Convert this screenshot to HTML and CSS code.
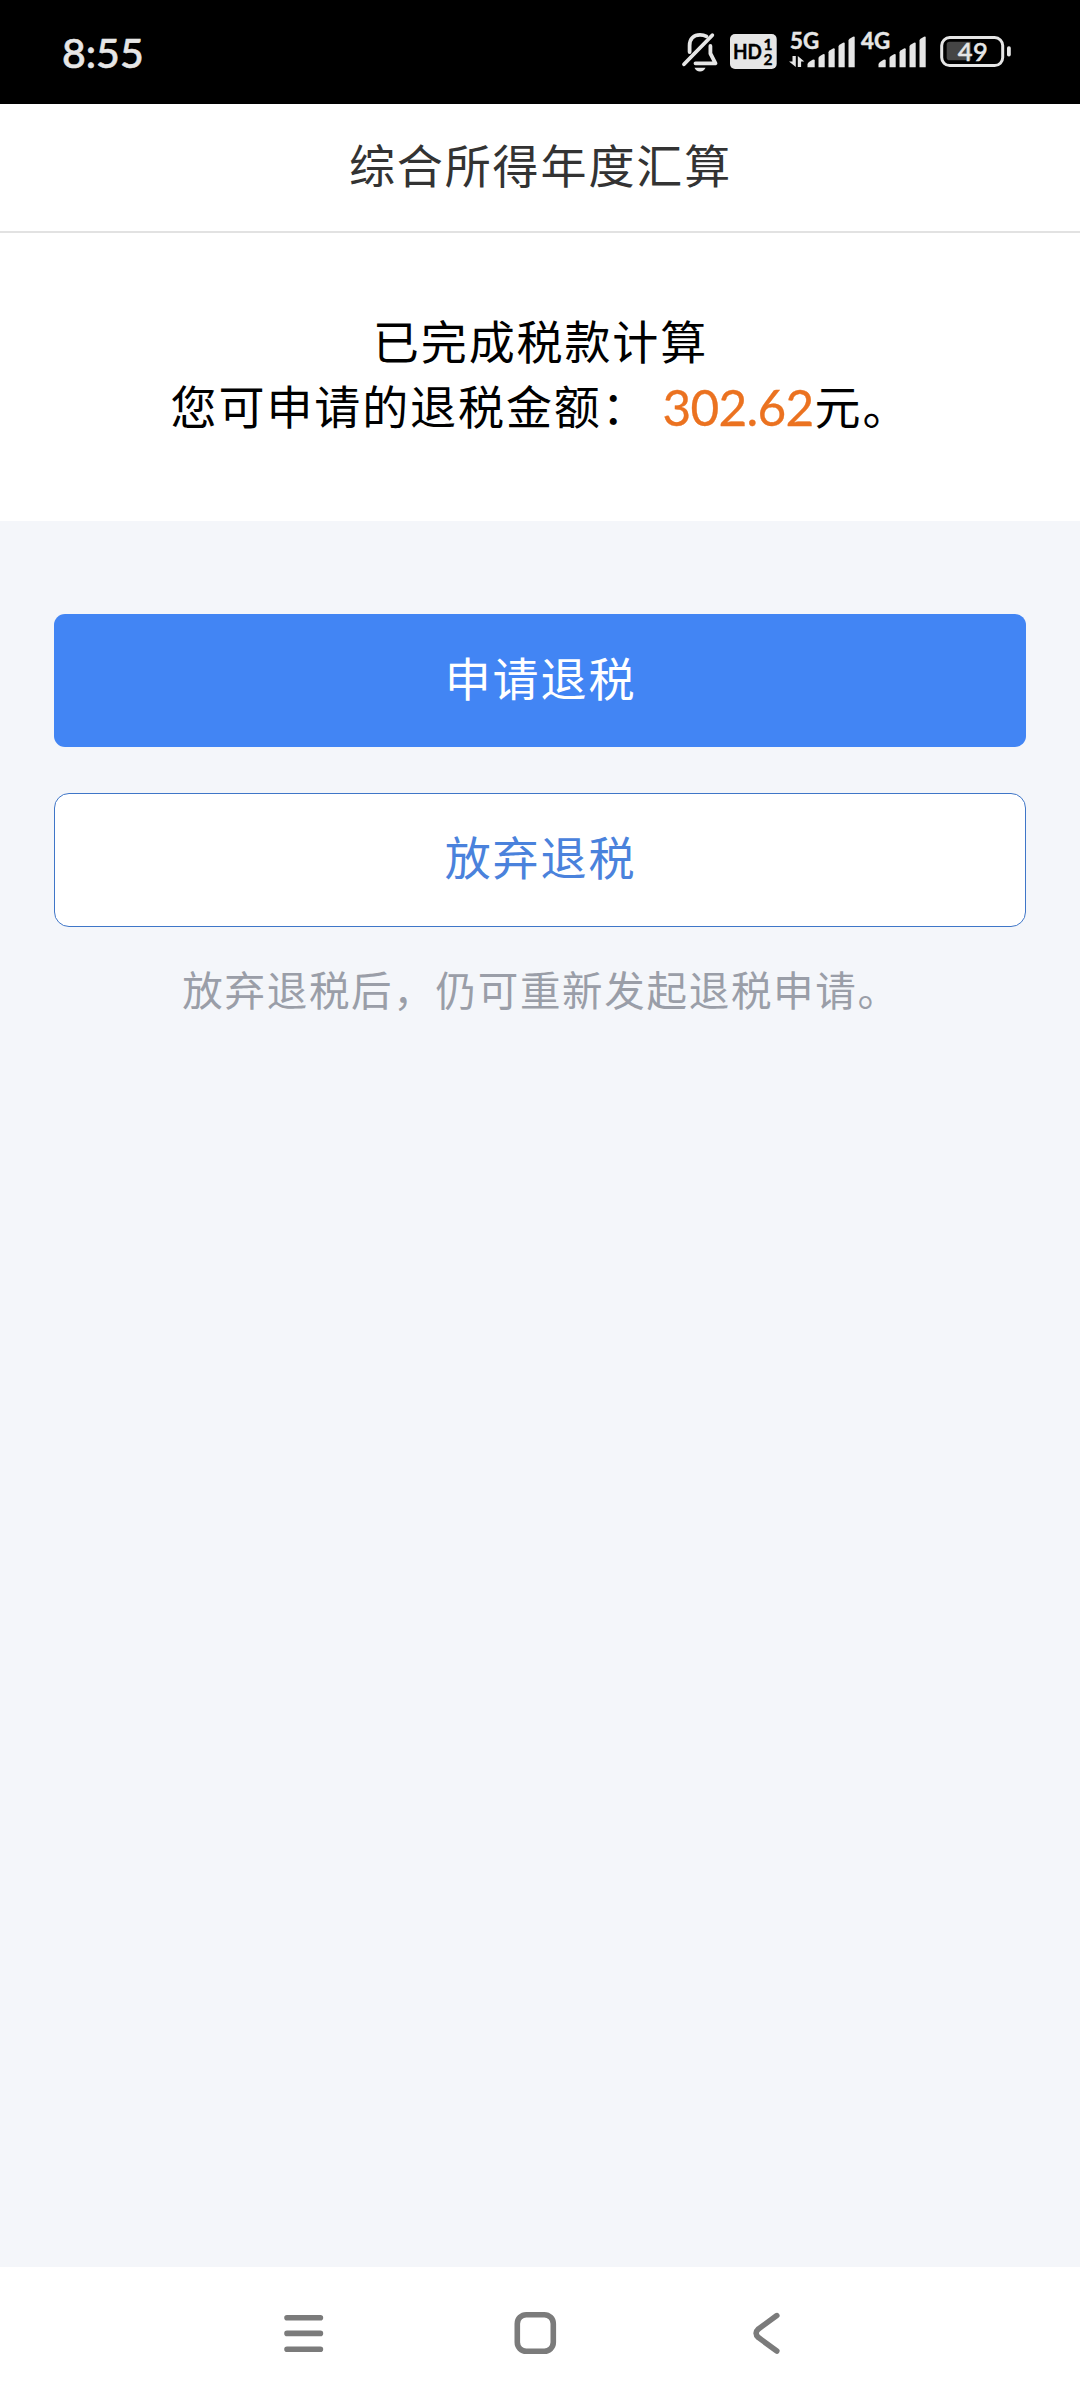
FILE: index.html
```html
<!DOCTYPE html>
<html lang="zh-CN">
<head>
<meta charset="utf-8">
<title>综合所得年度汇算</title>
<link rel="stylesheet" href="styles.css">
</head>
<body>
<div class="screen">
  <div class="status">
    <span class="clock">8:55</span>
    <svg class="status-icons" viewBox="680 0 334 104" width="334" height="104">
      <g fill="none" stroke="#e6e6e6" stroke-width="3.8" stroke-linecap="round" stroke-linejoin="round">
        <path d="M689.6 52V45.500C689.600 38.500 694 34.800 700 34.800C702.600 34.800 704.600 35.300 706.400 36.300"/>
        <path d="M710.400 46V53.500L715.500 63.300H695.500"/>
        <path d="M712.300 35.200L684 64.300"/>
      </g>
      <path class="ink" d="M694.500 67.800H705.500C704.600 70.200 702.600 71.400 700 71.400S695.400 70.200 694.500 67.800Z"/>
      <rect class="ink" x="730" y="34" width="46.700" height="35" rx="5"/>
      <g class="label dark">
        <text x="733" y="59.200" font-size="20.500" textLength="29" lengthAdjust="spacingAndGlyphs">HD</text>
        <text x="763.500" y="50" font-size="15.500">1</text>
        <text x="763.500" y="64.500" font-size="15.500">2</text>
      </g>
      <g class="label light">
        <text x="790" y="49.300" font-size="22" textLength="29" lengthAdjust="spacingAndGlyphs">5G</text>
        <text x="861" y="49.300" font-size="22" textLength="29" lengthAdjust="spacingAndGlyphs">4G</text>
      </g>
      <path class="ink" d="M792.500 56H795.800V67L789 61.500H792.500ZM797.800 56L804.300 61.500H801.100V67H797.800Z"/>
      <g id="bars" class="ink">
        <path d="M807.500 67.300V64.500Q807.500 63 809 62L812.500 59.800Q814.700 59 814.700 60.500V67.300Z"/>
        <path d="M818.500 67.300V58Q818.500 57 820 56L823 54.300Q824.700 53.700 824.700 55V67.300Z"/>
        <path d="M828.500 67.300V52.300Q828.500 51.300 830 50.300L833 48.500Q834.700 48 834.700 49.300V67.300Z"/>
        <path d="M838.500 67.300V46.500Q838.500 45.500 840 44.500L843 42.700Q844.700 42 844.700 43.500V67.300Z"/>
        <path d="M848.500 67.300V40.500Q848.500 39.500 850 38.500L853 36.800Q854.700 36 854.700 37.500V67.300Z"/>
      </g>
      <use href="#bars" x="71"/>
      <rect x="941.700" y="37.600" width="61" height="28" rx="8" fill="none" stroke="#e6e6e6" stroke-width="3"/>
      <path d="M949.500 41.800H970.700V60.200H949.500Q946.700 60.200 946.700 57.400V44.600Q946.700 41.800 949.500 41.800Z" fill="#454545"/>
      <rect class="ink" x="1007" y="46.300" width="3.800" height="10.200" rx="1.800"/>
      <text class="level light" x="957.800" y="61" textLength="30">49</text>
    </svg>
  </div>
  <header class="title">综合所得年度汇算</header>
  <section class="result">
    <p>已完成税款计算</p>
    <p>您可申请的退税金额：<span class="amount">302.62</span>元。</p>
  </section>
  <main class="actions">
    <button class="btn primary">申请退税</button>
    <button class="btn outline">放弃退税</button>
    <p class="hint">放弃退税后，仍可重新发起退税申请。</p>
  </main>
  <nav class="navbar">
    <svg viewBox="0 0 48 48" width="48" height="48"><path d="M7 8.700H40.400M7 24.400H40.400M7 40.200H40.400"/></svg>
    <svg viewBox="0 0 48 48" width="48" height="48"><rect x="6.300" y="5.700" width="36" height="36.600" rx="9"/></svg>
    <svg viewBox="0 0 48 48" width="48" height="48"><path d="M34.800 6.600L16.500 19.900Q11.700 24.200 16.500 28.600L34.800 42"/></svg>
  </nav>
</div>
</body>
</html>
```
FILE: styles.css
```css
* { box-sizing: border-box; }
body {
  margin: 0;
  font-family: "Noto Sans CJK SC", sans-serif;
  background: #f4f6fa;
}
p { margin: 0; }
.screen {
  width: 1080px;
  height: 2400px;
  display: flex;
  flex-direction: column;
}
.status {
  height: 104px;
  background: #000;
  display: flex;
  justify-content: space-between;
  align-items: center;
  padding: 0 66px 0 62px;
}
.clock {
  font: 500 41px Lato, sans-serif;
  color: #e6e6e6;
  -webkit-text-stroke: 0.600px #e6e6e6;
}
.ink { fill: #e6e6e6; }
.light { fill: #e6e6e6; stroke: #e6e6e6; stroke-width: 0.500px; }
.dark { fill: #000; stroke: #000; stroke-width: 0.400px; }
.label { font-family: Lato, sans-serif; font-weight: 700; }
.level { font: 500 25.500px Lato, sans-serif; }
.title {
  height: 129px;
  padding-left: 1px;
  background: #fff;
  border-bottom: 2px solid #e2e2e2;
  color: #333;
  font-size: 46px;
  letter-spacing: 1.900px;
  line-height: 118px;
  text-align: center;
}
.result {
  height: 288px;
  padding: 74px 0 0 1px;
  background: #fff;
  color: #000;
  font-size: 46px;
  letter-spacing: 1.900px;
  line-height: 65px;
  text-align: center;
  white-space: nowrap;
}
.amount {
  display: inline-block;
  width: 153px;
  margin-left: 12px;
  color: #eb7220;
  font: 400 49.500px/58px Lato, sans-serif;
  letter-spacing: -0.700px;
  vertical-align: -2px;
  -webkit-text-stroke: 0.300px #eb7220;
}
.actions {
  flex: 1;
  display: flex;
  flex-direction: column;
  padding: 93px 54px 0;
  background: #f4f6fa;
}
.btn {
  height: 133px;
  padding: 0 0 10px 1px;
  border: 0;
  border-radius: 11px;
  font-family: inherit;
  font-size: 46px;
  letter-spacing: 1.900px;
  line-height: 120px;
}
.primary { background: #4285f4; color: #fff; }
.outline {
  height: 134px;
  margin-top: 46px;
  border: 1px solid #3f76c8;
  border-radius: 15px;
  background: #fff;
  color: #4a82dc;
}
.hint {
  margin-top: 32px;
  padding-left: 2px;
  color: #9a9ea8;
  font-size: 40.500px;
  letter-spacing: 1.700px;
  line-height: 60px;
  text-align: center;
}
.navbar {
  height: 133px;
  padding: 42px 290px 0 280px;
  background: #fff;
  display: flex;
  justify-content: space-between;
}
.navbar svg {
  fill: none;
  stroke: #7b7b7b;
  stroke-width: 5.600;
  stroke-linecap: round;
  stroke-linejoin: round;
}
```
